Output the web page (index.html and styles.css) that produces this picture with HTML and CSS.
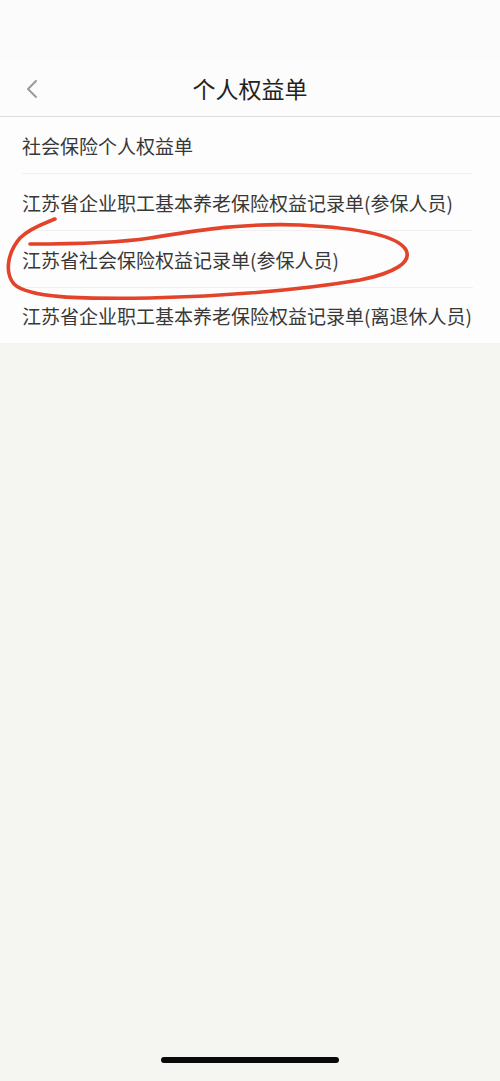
FILE: index.html
```html
<!DOCTYPE html>
<html lang="zh-CN">
<head>
<meta charset="utf-8">
<title>个人权益单</title>
<link rel="stylesheet" href="styles.css">
</head>
<body>
<div class="page">
  <div class="top">
    <div class="status"></div>
    <header class="nav">
      <span class="back">
        <svg width="14" height="20" viewBox="0 0 14 20"><path d="M11 2 L3 10 L11 18" fill="none" stroke="#9a9a9a" stroke-width="2" stroke-linecap="round" stroke-linejoin="round"/></svg>
      </span>
      <h1 class="title">个人权益单</h1>
    </header>
    <ul class="list">
      <li class="row">社会保险个人权益单</li>
      <li class="row">江苏省企业职工基本养老保险权益记录单(参保人员)</li>
      <li class="row">江苏省社会保险权益记录单(参保人员)</li>
      <li class="row">江苏省企业职工基本养老保险权益记录单(离退休人员)</li>
    </ul>
    <svg class="mark" width="500" height="320" viewBox="0 0 500 320">
      <path d="M55 219 C45 223, 30 228, 20 238 C8 252, 4 272, 14 284 C28 298, 80 299, 150 298 C230 296, 300 290, 360 280 C395 273, 412 262, 406 250 C398 236, 360 228, 300 225 C240 223, 200 230, 150 238 C110 244, 60 244, 30 244" fill="none" stroke="#e2432a" stroke-width="3.6" stroke-linecap="round" stroke-linejoin="round"/>
    </svg>
  </div>
  <div class="filler"></div>
  <div class="home"><span class="indicator"></span></div>
</div>
</body>
</html>
```
FILE: styles.css
```css
html, body {
  margin: 0;
  padding: 0;
}
body {
  background: #f5f5f1;
  font-family: "Noto Sans CJK SC", "Noto Sans", sans-serif;
  color: #333;
}
.page {
  width: 500px;
  min-height: 1081px;
  display: flex;
  flex-direction: column;
}
.top {
  position: relative;
  background: #fdfdfd;
}
.status {
  height: 60px;
  background: #fbfbfb;
}
.nav {
  height: 56px;
  display: flex;
  align-items: center;
  justify-content: center;
  position: relative;
  border-bottom: 1px solid #dedede;
  background: #fcfcfc;
}
.back {
  position: absolute;
  left: 25px;
  top: 19px;
  display: flex;
}
.title {
  margin: 0;
  font-size: 23px;
  font-weight: 400;
  color: #222;
  letter-spacing: 0;
  line-height: 1;
}
.list {
  list-style: none;
  margin: 0;
  padding: 0;
}
.row {
  height: 56px;
  display: flex;
  align-items: center;
  margin: 0 27px 0 22px;
  font-size: 19px;
  color: #383838;
  white-space: nowrap;
  border-bottom: 1px solid #f0f0f0;
}
.row:last-child {
  border-bottom: none;
  height: 55px;
}
.mark {
  position: absolute;
  left: 0;
  top: 0;
  pointer-events: none;
}
.filler {
  flex: 1;
}
.home {
  height: 24px;
  display: flex;
  justify-content: center;
  align-items: flex-start;
}
.indicator {
  width: 178px;
  height: 6px;
  border-radius: 3px;
  background: #0a0a0a;
}
```
